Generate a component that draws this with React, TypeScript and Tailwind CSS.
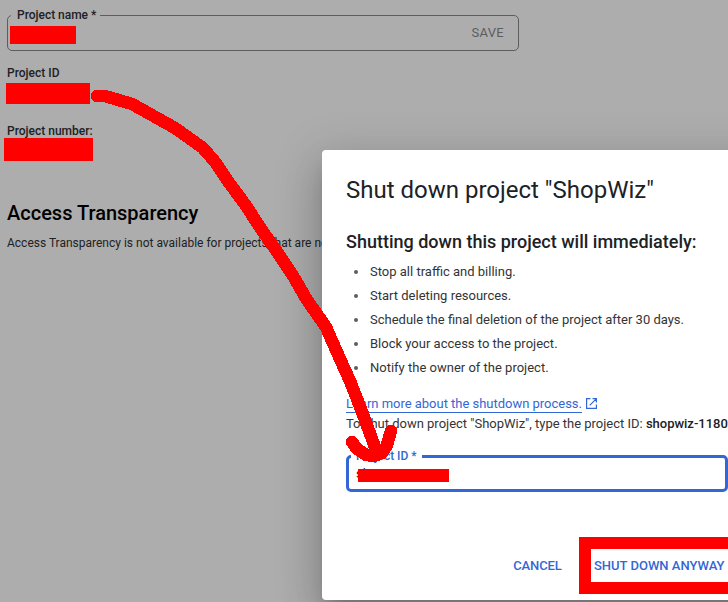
import type { ReactNode } from "react";

const effects = [
  "Stop all traffic and billing.",
  "Start deleting resources.",
  "Schedule the final deletion of the project after 30 days.",
  "Block your access to the project.",
  "Notify the owner of the project.",
];

function Field({ label, className, children }: { label: string; className: string; children?: ReactNode }) {
  return (
    <fieldset className={className}>
      <legend className="ml-[3px] h-3 pl-[6px] pr-[4px] text-xs leading-3 font-medium tracking-[-0.02px] whitespace-nowrap">
        {label}
      </legend>
      {children}
    </fieldset>
  );
}

function ProjectSettings() {
  return (
    <main className="flex flex-col items-start">
      <Field
        label="Project name *"
        className="ml-[7px] mt-[9px] h-[42px] w-[512px] rounded-[5px] border border-[#5c5d5f] text-[#202124]"
      >
        <div className="flex items-start justify-between pl-[2px] pr-[14px]">
          <div className="mt-[5px] h-[18px] w-[66px] bg-[#ff0000]" />
          <span className="mt-[4px] text-[13px] leading-4 tracking-[0.3px] text-[#5c5d5f]">SAVE</span>
        </div>
      </Field>
      <div className="ml-[7px] mt-[14px] text-xs leading-4 font-medium text-[#202124]">Project ID</div>
      <div className="ml-[6px] mt-[2px] h-[21px] w-[84px] bg-[#ff0000]" />
      <div className="ml-[7px] mt-[19px] text-xs leading-4 font-medium text-[#202124]">Project number:</div>
      <div className="-mt-px ml-[4px] h-[23px] w-[89px] bg-[#ff0000]" />
      <h2 className="ml-[7px] mt-[40px] text-xl leading-6 font-medium text-black">Access Transparency</h2>
      <p className="ml-[7px] mt-[10px] text-xs leading-4 whitespace-nowrap text-[#202124]">
        Access Transparency is not available for projects that are no
      </p>
    </main>
  );
}

function ShutdownDialog() {
  return (
    <section className="absolute left-[322px] top-[150px] flex h-[450px] w-[500px] flex-col rounded bg-white pl-6 text-[#202124] shadow-[0_11px_15px_-7px_rgba(0,0,0,0.2),0_24px_38px_3px_rgba(0,0,0,0.14),0_9px_46px_8px_rgba(0,0,0,0.12)]">
      <h1 className="mt-6 text-2xl leading-8 whitespace-nowrap">Shut down project "ShopWiz"</h1>
      <h2 className="mt-6 text-lg leading-6 font-medium whitespace-nowrap">Shutting down this project will immediately:</h2>
      <ul className="mt-[6px] text-[13px] leading-6 text-[#333436]">
        {effects.map((effect) => (
          <li key={effect} className="flex items-center pl-[8px]">
            <span className="mr-[12px] size-1 rounded-full bg-[#5c5d5f]" />
            {effect}
          </li>
        ))}
      </ul>
      <div className="mt-[16px] flex h-5 items-start text-[13px] text-[#3367d6]">
        <a className="h-[17px] border-b border-[#3367d6] leading-4 tracking-[-0.02px]">Learn more about the shutdown process.</a>
        <svg className="ml-[4px] mt-[2px] size-[11px]" viewBox="0 0 11 11" fill="none" stroke="currentColor" strokeWidth="1.2">
          <path d="M4.5 .6H.6v9.8h9.8V6.5M6.5 .6h3.9v3.9M10.2.8 3.7 7.3" />
        </svg>
      </div>
      <p className="text-[13px] leading-4 tracking-[-0.01px] whitespace-nowrap text-[#333436]">
        To shut down project "ShopWiz", type the project ID: <b className="font-medium text-[#202124]">shopwiz-1180</b>
      </p>
      <Field
        label="Project ID *"
        className="mt-[18px] h-[42px] w-[382px] rounded-[5px] border-3 border-[#3367d6] text-[#3367d6] [&>legend]:ml-[2px] [&>legend]:pl-[5px] [&>legend]:pr-[5px]"
      >
        <div className="relative pl-[7px] pt-[4px] text-[13px] leading-4 text-[#202124]">
          shopwiz-1180
          <span className="absolute left-[9px] top-[7px] h-[13px] w-[91px] bg-[#ff0000]" />
        </div>
      </Field>
      <div className="mt-[45px] flex items-start text-[13px] leading-4 font-medium text-[#3367d6]">
        <button className="ml-[167px] mt-[21px] w-[49px] tracking-[-0.1px]">CANCEL</button>
        <button className="ml-[17px] h-[57px] w-[162px] border-[12px] border-[#ff0000] pl-[3px] text-left whitespace-nowrap">
          SHUT DOWN ANYWAY
        </button>
      </div>
    </section>
  );
}

function HandDrawnArrow() {
  return (
    <svg
      className="pointer-events-none absolute left-0 top-0 h-[602px] w-[728px]"
      viewBox="0 0 728 602"
      fill="none"
      stroke="#ff0000"
      strokeWidth="12.5"
      strokeLinecap="round"
      strokeLinejoin="round"
      shapeRendering="crispEdges"
    >
      <path d="M97 96h8L132 104 175 128 203 148 216 163 230 184 247 207 259 226 280 256 292 274 307 300 326 327 336 350 350 381 362.5 413 376 450" />
      <path d="M352 442 357 449 366 455 374 456 382 453 387 445 391 431" />
    </svg>
  );
}

export default function App() {
  return (
    <div className="relative h-[602px] w-[728px] overflow-hidden bg-[#adadad] font-[Roboto,sans-serif]">
      <ProjectSettings />
      <ShutdownDialog />
      <HandDrawnArrow />
    </div>
  );
}
